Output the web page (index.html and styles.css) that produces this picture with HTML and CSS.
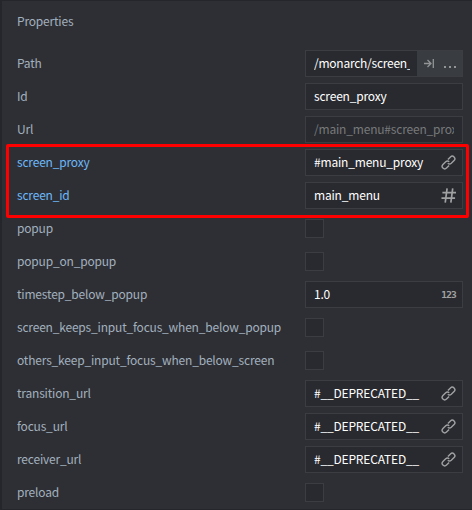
FILE: index.html
```
<!DOCTYPE html>
<html lang="en">
<head>
<meta charset="utf-8">
<title>Properties</title>
<link rel="stylesheet" href="styles.css">
</head>
<body>
<svg class="defs" aria-hidden="true">
  <symbol id="link" viewBox="0 0 16 16">
    <g fill="none" stroke="currentColor" stroke-width="1.5" transform="rotate(-45 8 8)">
      <path d="M6.2 10.7H2.3A2.7 2.7 0 0 1 2.3 5.3H6.5A2.7 2.7 0 0 1 9.1 8"/>
      <path d="M9.8 5.3H13.7A2.7 2.7 0 0 1 13.7 10.7H9.5A2.7 2.7 0 0 1 6.9 8"/>
    </g>
  </symbol>
</svg>
<main class="panel">
  <h1 class="title">Properties</h1>
  <div class="rows">
    <div class="row"><span class="label">Path</span><div class="field path"><span class="value">/monarch/screen_proxy</span><div class="buttons"><svg class="goto" viewBox="0 0 10 9"><path d="M0 4.5H7M3.5 1L7 4.5L3.5 8M9.3 0V9" fill="none" stroke="currentColor" stroke-width="1.3"/></svg><svg class="dots" viewBox="0 0 12 2"><path d="M0 0h2v2H0zM5 0h2v2H5zM10 0h2v2h-2z" fill="currentColor"/></svg></div></div></div>
    <div class="row"><span class="label">Id</span><div class="field"><span class="value">screen_proxy</span></div></div>
    <div class="row"><span class="label">Url</span><div class="field readonly"><span class="value">/main_menu#screen_proxy</span></div></div>
    <div class="row changed"><span class="label">screen_proxy</span><div class="field"><span class="value">#main_menu_proxy</span><svg class="icon"><use href="#link"/></svg></div></div>
    <div class="row changed"><span class="label">screen_id</span><div class="field"><span class="value">main_menu</span><svg class="icon" viewBox="0 0 16 16"><path d="M6.5 .5L4.5 15.5M12.5 .5L10.5 15.5M1.5 5H16M.5 10.8H15" fill="none" stroke="currentColor" stroke-width="1.8"/></svg></div></div>
    <div class="row"><span class="label">popup</span><div class="check"></div></div>
    <div class="row"><span class="label">popup_on_popup</span><div class="check"></div></div>
    <div class="row"><span class="label">timestep_below_popup</span><div class="field"><span class="value">1.0</span><span class="number">123</span></div></div>
    <div class="row"><span class="label">screen_keeps_input_focus_when_below_popup</span><div class="check"></div></div>
    <div class="row"><span class="label">others_keep_input_focus_when_below_screen</span><div class="check"></div></div>
    <div class="row"><span class="label">transition_url</span><div class="field"><span class="value">#__DEPRECATED__</span><svg class="icon"><use href="#link"/></svg></div></div>
    <div class="row"><span class="label">focus_url</span><div class="field"><span class="value">#__DEPRECATED__</span><svg class="icon"><use href="#link"/></svg></div></div>
    <div class="row"><span class="label">receiver_url</span><div class="field"><span class="value">#__DEPRECATED__</span><svg class="icon"><use href="#link"/></svg></div></div>
    <div class="row"><span class="label">preload</span><div class="check"></div></div>
  </div>
  <div class="highlight"></div>
</main>
</body>
</html>
```
FILE: styles.css
```
* { box-sizing: border-box; }
body {
  margin: 0;
  height: 510px;
  overflow: hidden;
  padding: 1px 0 1px 2px;
  background: #25262b;
  color: #a2b0be;
  font: 12px/20px "Noto Sans CJK SC", sans-serif;
  letter-spacing: -0.19px;
}
.defs { position: absolute; width: 0; height: 0; }
.panel { height: 508px; background: #2e2f34; overflow: hidden; }
.title { margin: 0; padding: 10px 0 0 15px; font-size: 12px; font-weight: 400; line-height: 20px; }
.rows { padding: 16px 0 0 15px; }
.row { display: grid; grid-template-columns: 288px 158px; align-items: center; height: 33px; }
.label { white-space: nowrap; padding-bottom: 1px; }
.changed .label { color: #6cb8fa; }
.field {
  display: flex;
  align-items: center;
  height: 27px;
  padding: 0 6px 0 8px;
  border: 1px solid #3b3d42;
  background: #292a2f;
  color: #fff;
}
.value { flex: 1; min-width: 0; overflow: hidden; white-space: nowrap; padding-bottom: 1px; }
.readonly { color: #77797b; }
.readonly .value { margin-right: 2px; }
.path { padding-right: 0; }
.path .value { letter-spacing: -0.25px; }
.buttons {
  display: flex;
  align-items: center;
  width: 45px;
  height: 25px;
  margin-left: 7px;
  padding-left: 7px;
  background: #393c41;
  color: #929495;
}
.goto { width: 10px; height: 9px; }
.dots { width: 12px; height: 2px; margin: 6px 0 0 10px; }
.icon { width: 15px; height: 15px; color: #a0a1a2; }
.number { color: #a0a1a2; font: bold 9.5px/12px "DejaVu Sans Mono", monospace; letter-spacing: -0.8px; }
.check { width: 19px; height: 19px; border: 1px solid #3b3d42; background: #292a2f; }
.highlight {
  position: absolute;
  left: 6px;
  top: 144px;
  width: 463px;
  height: 74px;
  border: 3px solid #f00;
  border-radius: 2px;
}
```
